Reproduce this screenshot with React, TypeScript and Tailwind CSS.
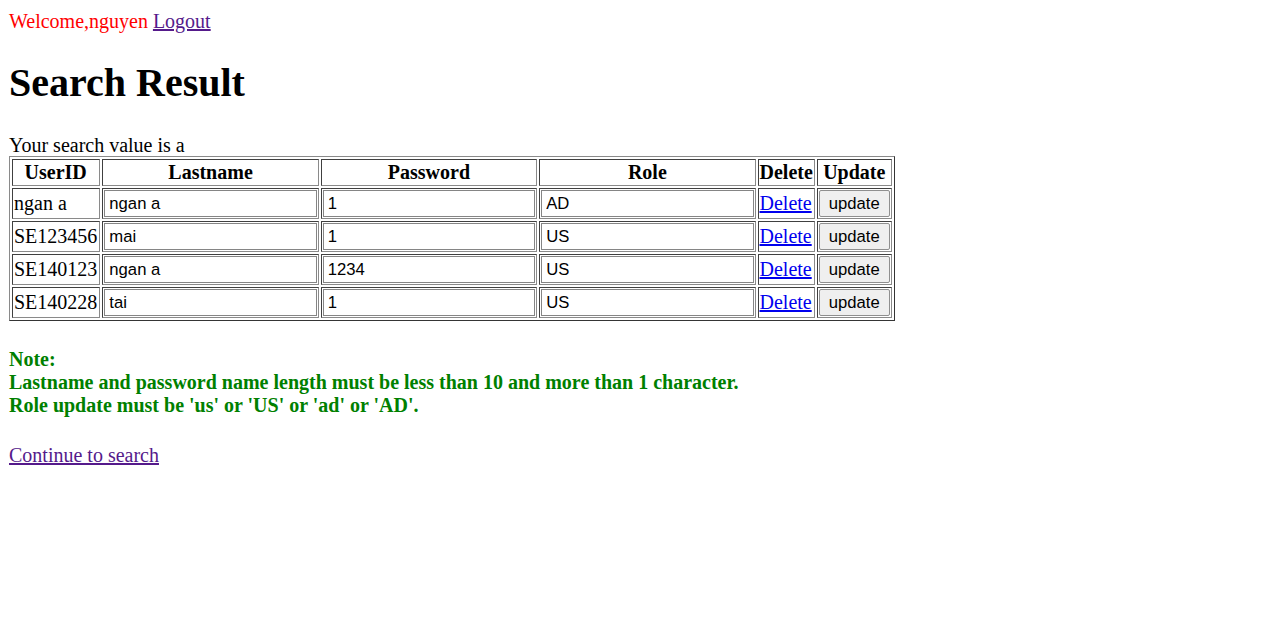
import React from "react";

const rows = [
  { id: "ngan a", last: "ngan a", pass: "1", role: "AD" },
  { id: "SE123456", last: "mai", pass: "1", role: "US" },
  { id: "SE140123", last: "ngan a", pass: "1234", role: "US" },
  { id: "SE140228", last: "tai", pass: "1", role: "US" },
];

const cell =
  "border border-solid border-t-[#404040] border-l-[#404040] border-r-[#8a8a8a] border-b-[#8a8a8a] p-px";

function TextInput({ value }: { value: string }) {
  return (
    <input
      type="text"
      defaultValue={value}
      className="block w-[212.4px] h-[27px] border border-solid border-[#858585] bg-white pl-[4px] pr-[2px] font-['Liberation_Sans',Arial,sans-serif] text-[16.67px] text-black outline-none"
    />
  );
}

export default function App() {
  return (
    <div className="px-[9px] pt-[10px] font-['Liberation_Serif','Times_New_Roman',serif] text-[20px] leading-[23px] text-black bg-white min-h-[617px]">
      <div>
        <span className="text-[#ff0000]">Welcome,nguyen</span>{" "}
        <a href="#" className="text-[#551a8b] underline">
          Logout
        </a>
      </div>
      <h1 className="mt-[27px] mb-[28px] text-[40px] leading-[46px] font-bold">Search Result</h1>
      <div className="leading-[22px]">Your search value is a</div>
      <table className="border-separate border-spacing-[2px] border border-solid border-t-[#8a8a8a] border-l-[#8a8a8a] border-r-[#353535] border-b-[#353535]">
        <thead>
          <tr>
            <th className={`${cell} pr-[2px] text-center font-bold`}>UserID</th>
            <th className={`${cell} text-center font-bold`}>Lastname</th>
            <th className={`${cell} text-center font-bold`}>Password</th>
            <th className={`${cell} text-center font-bold`}>Role</th>
            <th className={`${cell} text-center font-bold`}>Delete</th>
            <th className={`${cell} text-center font-bold`}>Update</th>
          </tr>
        </thead>
        <tbody>
          {rows.map((r) => (
            <tr key={r.id}>
              <td className={`${cell} pr-[2px] align-middle`}>{r.id}</td>
              <td className={cell}>
                <TextInput value={r.last} />
              </td>
              <td className={cell}>
                <TextInput value={r.pass} />
              </td>
              <td className={cell}>
                <TextInput value={r.role} />
              </td>
              <td className={`${cell} align-middle`}>
                <a href="#" className="text-[#0000ee] underline">
                  Delete
                </a>
              </td>
              <td className={cell}>
                <button
                  type="button"
                  className="block h-[27px] px-[9px] border border-solid border-[#8f8f8f] rounded-[2px] bg-[#efefef] font-['Liberation_Sans',Arial,sans-serif] text-[16.67px] leading-[19px] text-black"
                >
                  update
                </button>
              </td>
            </tr>
          ))}
        </tbody>
      </table>
      <div className="mt-[27px] mb-[27px] font-bold text-[#008000]">
        Note:
        <br />
        Lastname and password name length must be less than 10 and more than 1 character.
        <br />
        Role update must be 'us' or 'US' or 'ad' or 'AD'.
      </div>
      <a href="#" className="text-[#551a8b] underline">
        Continue to search
      </a>
    </div>
  );
}
